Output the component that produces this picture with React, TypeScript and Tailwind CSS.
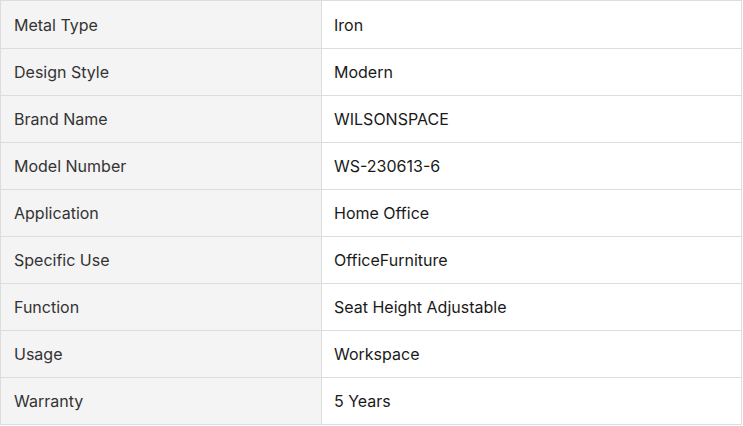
import React from "react";

const rows: [string, string][] = [
  ["Metal Type", "Iron"],
  ["Design Style", "Modern"],
  ["Brand Name", "WILSONSPACE"],
  ["Model Number", "WS-230613-6"],
  ["Application", "Home Office"],
  ["Specific Use", "OfficeFurniture"],
  ["Function", "Seat Height Adjustable"],
  ["Usage", "Workspace"],
  ["Warranty", "5 Years"],
];

export default function App() {
  return (
    <div className="bg-white w-[743px] h-[426px]" style={{ fontFamily: "Inter, 'Noto Sans', sans-serif" }}>
      <table className="border-collapse w-[742px] text-[16px] leading-[20px]">
        <tbody>
          {rows.map(([k, v], i) => (
            <tr key={k} className={i === 0 ? "h-[48px]" : "h-[47px]"}>
              <td className="border border-[#dddddd] bg-[#f4f4f4] w-[321px] pl-[13px] text-[#333333]">{k}</td>
              <td className="border border-[#dddddd] pl-[12px] text-[#1a1a1a]">{v}</td>
            </tr>
          ))}
        </tbody>
      </table>
    </div>
  );
}
